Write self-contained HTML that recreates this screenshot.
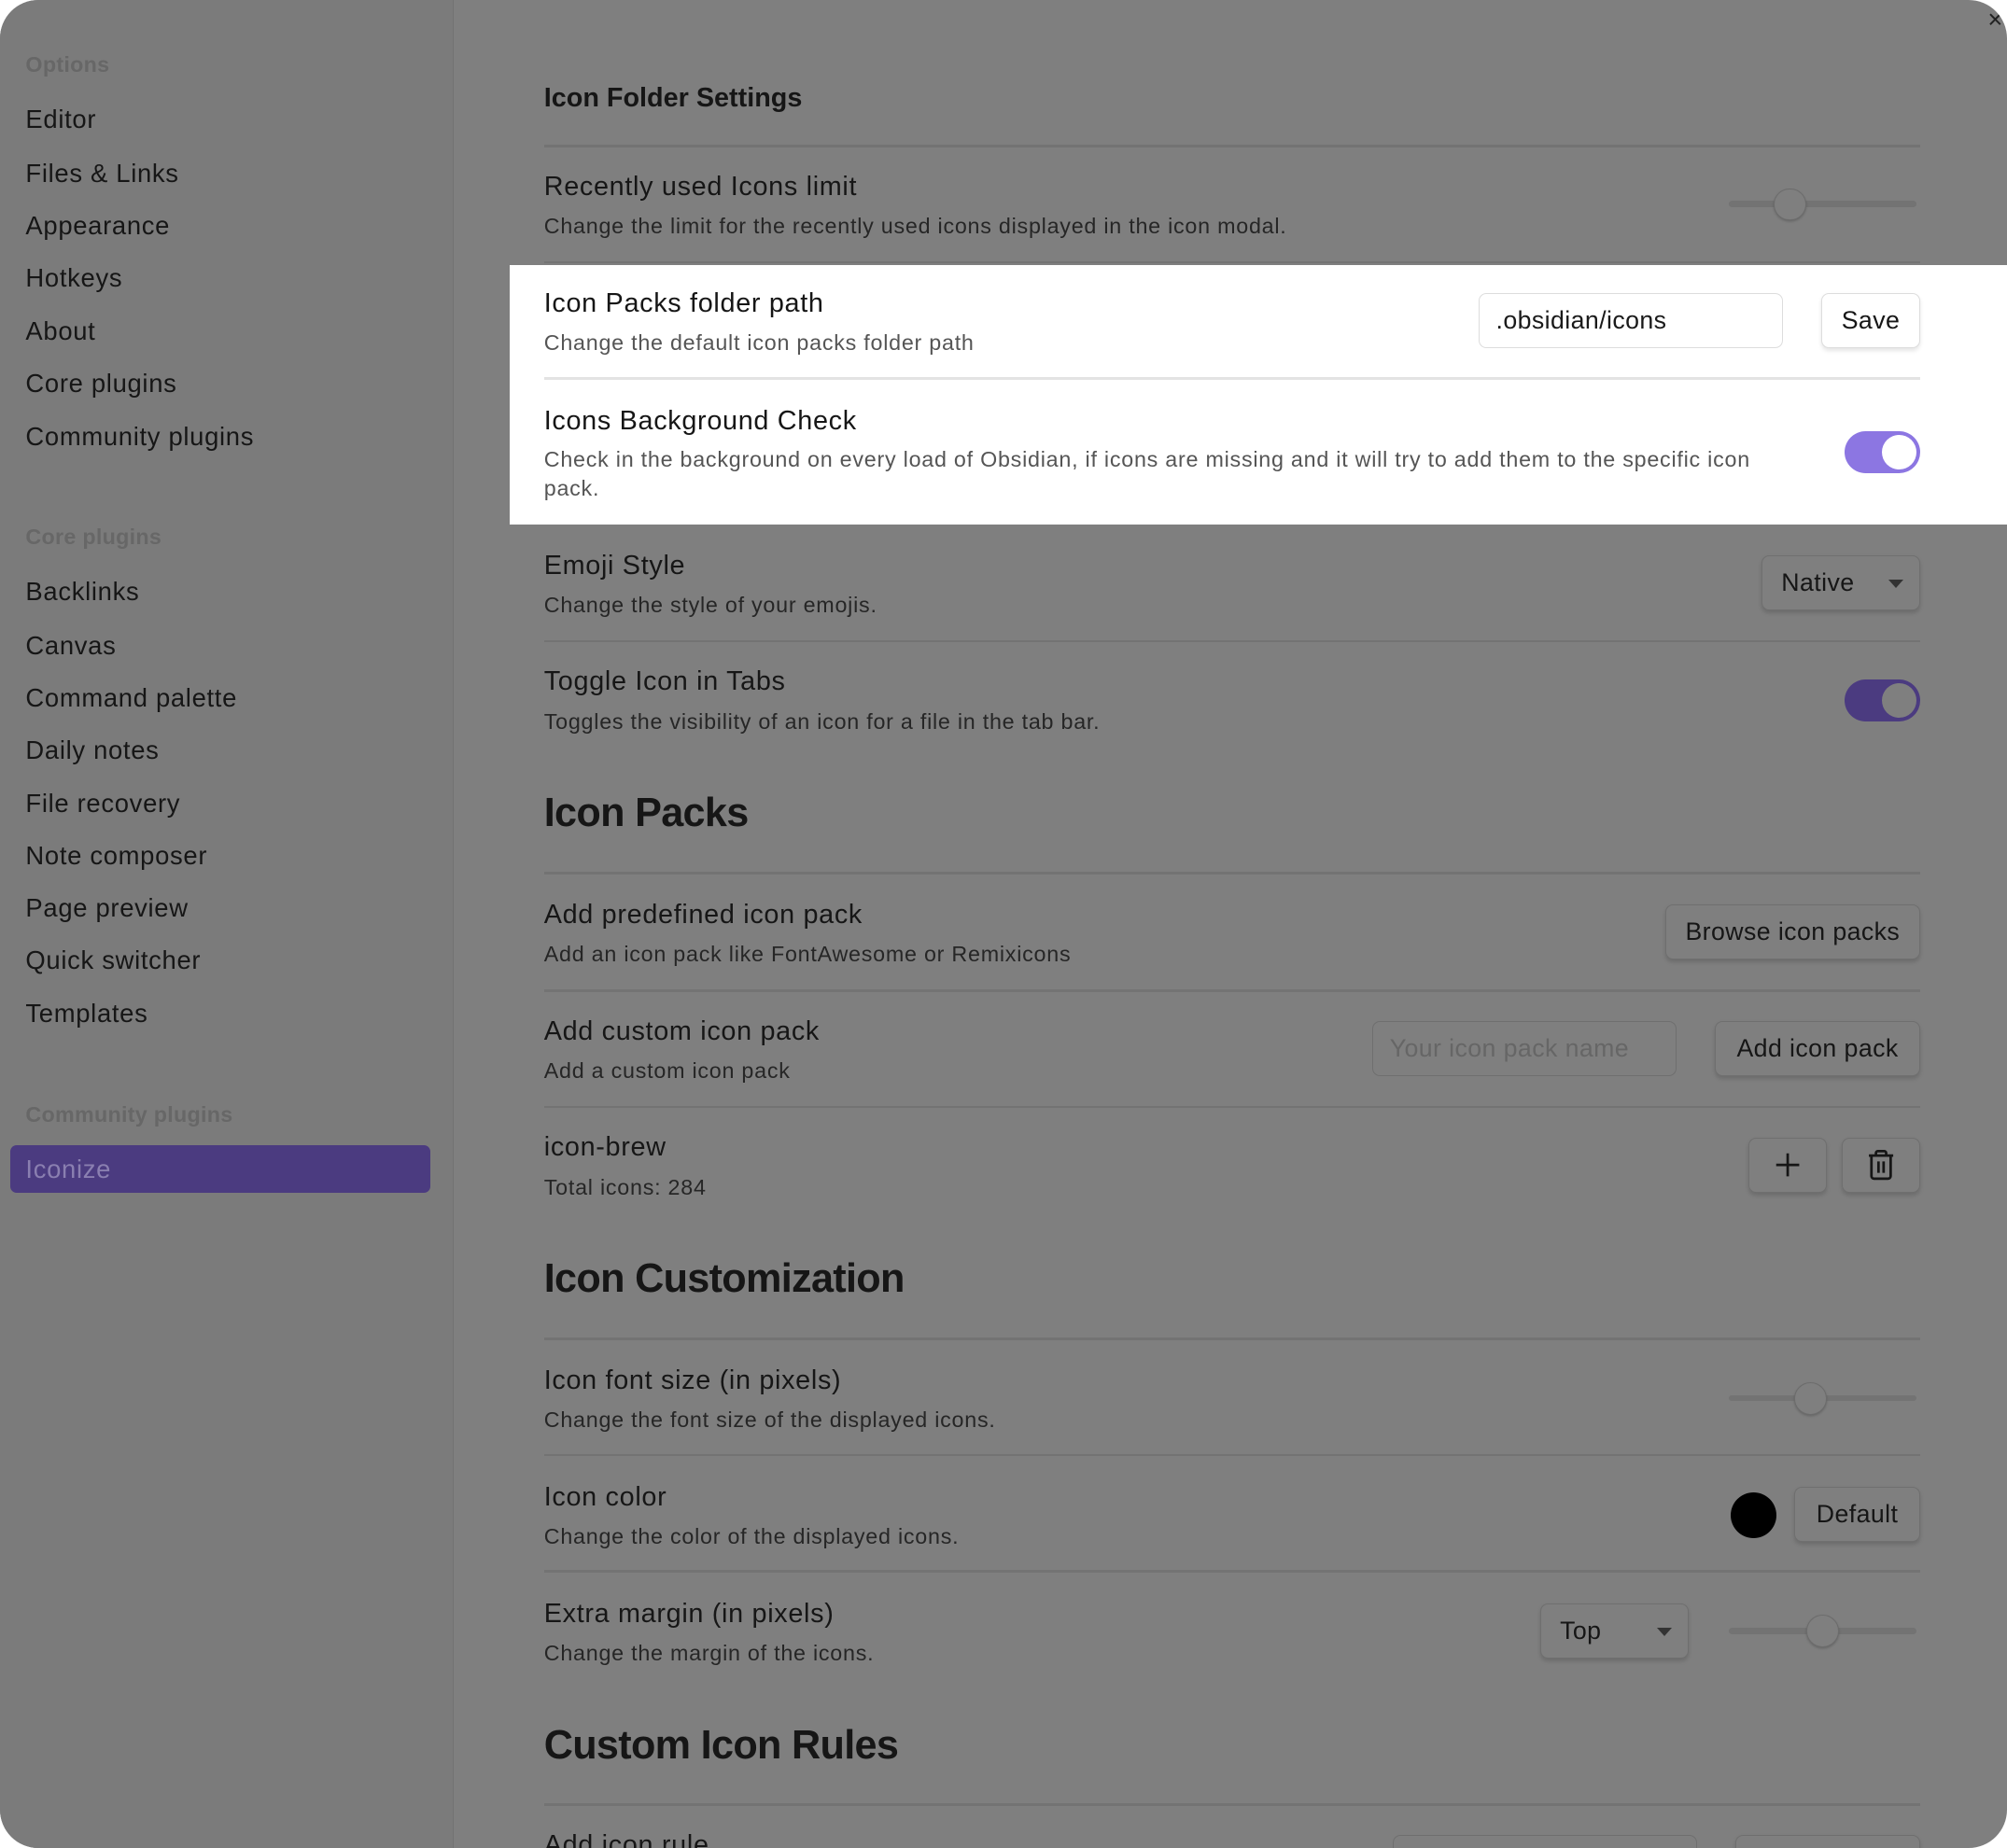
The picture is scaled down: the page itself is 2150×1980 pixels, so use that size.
<!DOCTYPE html>
<html><head><meta charset="utf-8">
<style>
html,body{margin:0;padding:0;background:#fff;}
body{width:1568px;height:1444px;zoom:1.37117;overflow:hidden;font-family:"Liberation Sans",sans-serif;}
#win{position:absolute;left:0;top:0;width:1568px;height:1444px;border-radius:30px;background:#7f7f7f;overflow:hidden;}
#side{position:absolute;left:0;top:0;width:354px;height:1444px;background:#7b7b7b;border-right:1px solid #727272;}
.a{position:absolute;white-space:nowrap;}
.sh{font-size:17px;font-weight:bold;color:#676767;left:20px;letter-spacing:0.2px;}
.si{font-size:20px;color:#161616;left:20px;letter-spacing:0.5px;}
.sel{position:absolute;left:8px;top:895px;width:328px;height:37px;background:#4b3b80;border-radius:5px;}
.h3{font-size:21px;font-weight:bold;color:#161616;left:425px;}
.h2{font-size:31.5px;font-weight:bold;color:#161616;left:425px;letter-spacing:-0.5px;}
.n{font-size:21px;color:#161616;left:425px;letter-spacing:0.5px;}
.d{font-size:17px;color:#262626;left:425px;letter-spacing:0.55px;}
.hr{position:absolute;left:425px;width:1075px;height:2px;background:#737373;}
.btn{position:absolute;border:1px solid #6f6f6f;border-radius:6px;background:#7f7f7f;box-shadow:0 2px 3px rgba(0,0,0,.15);font-size:19.5px;letter-spacing:0.3px;color:#161616;display:flex;align-items:center;justify-content:center;box-sizing:border-box;}
.inp{position:absolute;border:1px solid #6f6f6f;border-radius:6px;box-sizing:border-box;font-size:19.5px;letter-spacing:0.3px;display:flex;align-items:center;padding-left:13px;}
.sl{position:absolute;height:5px;background:#737373;border-radius:3px;width:146px;left:1351px;}
.kn{position:absolute;width:24px;height:24px;border-radius:50%;background:#7f7f7f;border:1px solid #6c6c6c;box-shadow:0 1px 2px rgba(0,0,0,.2);}
.tg{position:absolute;left:1441px;width:59px;height:33px;border-radius:17px;}
.tg i{position:absolute;right:3px;top:3px;width:27px;height:27px;border-radius:50%;}
</style></head><body>
<div id="win">
<div id="side"></div>
<div class="a sh" style="top:41px">Options</div>
<div class="a si" style="top:82px">Editor</div>
<div class="a si" style="top:124px">Files &amp; Links</div>
<div class="a si" style="top:165px">Appearance</div>
<div class="a si" style="top:206px">Hotkeys</div>
<div class="a si" style="top:247px">About</div>
<div class="a si" style="top:288px">Core plugins</div>
<div class="a si" style="top:330px">Community plugins</div>
<div class="a sh" style="top:410px">Core plugins</div>
<div class="a si" style="top:451px">Backlinks</div>
<div class="a si" style="top:493px">Canvas</div>
<div class="a si" style="top:534px">Command palette</div>
<div class="a si" style="top:575px">Daily notes</div>
<div class="a si" style="top:616px">File recovery</div>
<div class="a si" style="top:657px">Note composer</div>
<div class="a si" style="top:698px">Page preview</div>
<div class="a si" style="top:739px">Quick switcher</div>
<div class="a si" style="top:780px">Templates</div>
<div class="a sh" style="top:861px">Community plugins</div>
<div class="sel"></div>
<div class="a si" style="top:902px;color:#8a7fb0">Iconize</div>

<div class="a h3" style="top:65px">Icon Folder Settings</div>
<div class="hr" style="top:113px"></div>
<div class="a n" style="top:134px">Recently used Icons limit</div>
<div class="a d" style="top:167px">Change the limit for the recently used icons displayed in the icon modal.</div>
<div class="sl" style="top:157px"></div><div class="kn" style="left:1386px;top:147px"></div>
<div class="hr" style="top:204px"></div>

<div style="position:absolute;left:398px;top:207px;width:1170px;height:203px;background:#fff"></div>
<div class="a n" style="top:225px">Icon Packs folder path</div>
<div class="a d" style="top:258px;color:#555">Change the default icon packs folder path</div>
<div class="inp" style="left:1155px;top:229px;width:238px;height:43px;border-color:#ddd;color:#1a1a1a">.obsidian/icons</div>
<div class="btn" style="left:1423px;top:229px;width:77px;height:43px;background:#fff;border-color:#ddd;box-shadow:0 2px 3px rgba(0,0,0,.1)">Save</div>
<div class="hr" style="top:295px;background:#e3e3e3"></div>
<div class="a n" style="top:317px">Icons Background Check</div>
<div class="a d" style="top:349px;color:#555">Check in the background on every load of Obsidian, if icons are missing and it will try to add them to the specific icon</div>
<div class="a d" style="top:372px;color:#555">pack.</div>
<div class="tg" style="top:337px;background:#8c76e2"><i style="background:#fff"></i></div>

<div class="a n" style="top:430px">Emoji Style</div>
<div class="a d" style="top:463px">Change the style of your emojis.</div>
<div class="btn" style="left:1376px;top:434px;width:124px;height:43px;justify-content:flex-start;padding-left:15px">Native<span style="position:absolute;right:12px;top:18px;border:6px solid transparent;border-top:7px solid #333"></span></div>
<div class="hr" style="top:500px"></div>
<div class="a n" style="top:521px">Toggle Icon in Tabs</div>
<div class="a d" style="top:554px">Toggles the visibility of an icon for a file in the tab bar.</div>
<div class="tg" style="top:531px;background:#4b3b80"><i style="background:#7f7f7f"></i></div>

<div class="a h2" style="top:618px">Icon Packs</div>
<div class="hr" style="top:681px"></div>
<div class="a n" style="top:703px">Add predefined icon pack</div>
<div class="a d" style="top:736px">Add an icon pack like FontAwesome or Remixicons</div>
<div class="btn" style="left:1301px;top:707px;width:199px;height:43px">Browse icon packs</div>
<div class="hr" style="top:773px"></div>
<div class="a n" style="top:794px">Add custom icon pack</div>
<div class="a d" style="top:827px">Add a custom icon pack</div>
<div class="inp" style="left:1072px;top:798px;width:238px;height:43px;color:#666">Your icon pack name</div>
<div class="btn" style="left:1340px;top:798px;width:160px;height:43px">Add icon pack</div>
<div class="hr" style="top:864px"></div>
<div class="a n" style="top:885px">icon-brew</div>
<div class="a d" style="top:918px">Total icons: 284</div>
<div class="btn" style="left:1366px;top:889px;width:61px;height:43px"><svg width="22" height="22" viewBox="0 0 22 22"><path d="M11 2v18M2 11h18" stroke="#161616" stroke-width="2"/></svg></div>
<div class="btn" style="left:1439px;top:889px;width:61px;height:43px"><svg width="22" height="24" viewBox="0 0 22 24"><path d="M1.5 4.5h19M7 4.5V2.5a1.5 1.5 0 0 1 1.5-1.5h5a1.5 1.5 0 0 1 1.5 1.5v2M3.5 4.5v16a2 2 0 0 0 2 2h11a2 2 0 0 0 2-2v-16M9 9v9M13 9v9" stroke="#161616" stroke-width="2" fill="none"/></svg></div>

<div class="a h2" style="top:982px">Icon Customization</div>
<div class="hr" style="top:1045px"></div>
<div class="a n" style="top:1067px">Icon font size (in pixels)</div>
<div class="a d" style="top:1100px">Change the font size of the displayed icons.</div>
<div class="sl" style="top:1090px"></div><div class="kn" style="left:1402px;top:1080px"></div>
<div class="hr" style="top:1136px"></div>
<div class="a n" style="top:1158px">Icon color</div>
<div class="a d" style="top:1191px">Change the color of the displayed icons.</div>
<div style="position:absolute;left:1352px;top:1166px;width:36px;height:36px;border-radius:50%;background:#000"></div>
<div class="btn" style="left:1402px;top:1162px;width:98px;height:43px">Default</div>
<div class="hr" style="top:1227px"></div>
<div class="a n" style="top:1249px">Extra margin (in pixels)</div>
<div class="a d" style="top:1282px">Change the margin of the icons.</div>
<div class="btn" style="left:1203px;top:1253px;width:116px;height:43px;justify-content:flex-start;padding-left:15px">Top<span style="position:absolute;right:12px;top:18px;border:6px solid transparent;border-top:7px solid #333"></span></div>
<div class="sl" style="top:1272px"></div><div class="kn" style="left:1411px;top:1262px"></div>

<div class="a h2" style="top:1346px">Custom Icon Rules</div>
<div class="hr" style="top:1409px"></div>
<div class="a n" style="top:1430px">Add icon rule</div>
<div class="inp" style="left:1088px;top:1434px;width:238px;height:43px"></div>
<div class="btn" style="left:1356px;top:1434px;width:144px;height:43px"></div>
<div class="a" style="left:1553px;top:4px;font-size:20px;color:#222">×</div>
</div>
</body></html>
